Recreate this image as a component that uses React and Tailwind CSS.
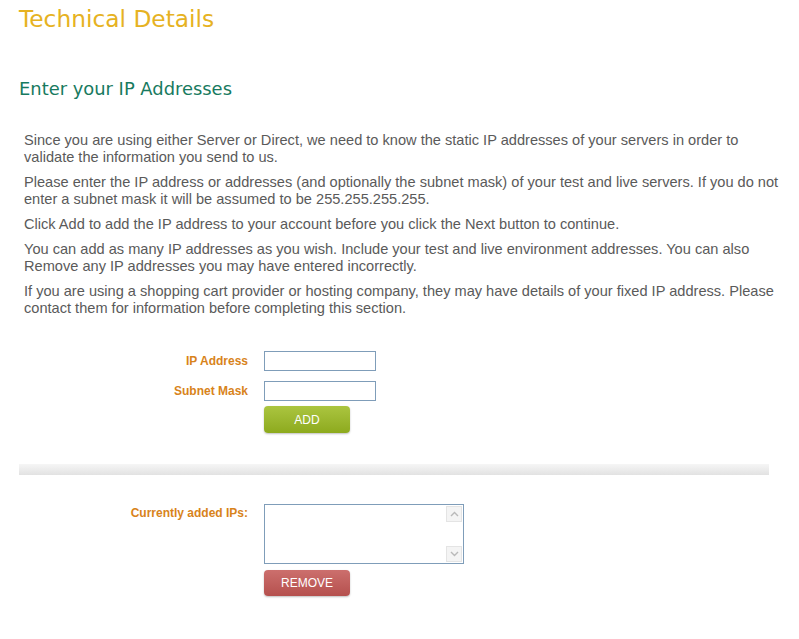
import React from 'react';

const paragraphs = [
  'Since you are using either Server or Direct, we need to know the static IP addresses of your servers in order to validate the information you send to us.',
  'Please enter the IP address or addresses (and optionally the subnet mask) of your test and live servers. If you do not enter a subnet mask it will be assumed to be 255.255.255.255.',
  'Click Add to add the IP address to your account before you click the Next button to continue.',
  'You can add as many IP addresses as you wish. Include your test and live environment addresses. You can also Remove any IP addresses you may have entered incorrectly.',
  'If you are using a shopping cart provider or hosting company, they may have details of your fixed IP address. Please contact them for information before completing this section.',
];

function Label({ children }) {
  return (
    <div className="w-[248px] text-right text-[12px] font-bold text-[#d8831b] font-['Liberation_Sans',Arial,sans-serif]">
      {children}
    </div>
  );
}

function Chevron({ up }) {
  return (
    <svg width="9" height="6" viewBox="0 0 9 6" className="text-[#b9b9b9]">
      <path d={up ? 'M1 5 L4.5 1.5 L8 5' : 'M1 1 L4.5 4.5 L8 1'} fill="none" stroke="currentColor" strokeWidth="1.4" />
    </svg>
  );
}

export default function App() {
  return (
    <div className="min-h-[639px] bg-white pl-[19px] pt-[4px] font-['Liberation_Sans',Arial,sans-serif]">
      <h1 className="text-[23.3px] leading-[29px] text-[#e6b222] font-['DejaVu_Sans',Verdana,sans-serif]">
        Technical Details
      </h1>

      <h2 className="mt-[45px] text-[17.9px] leading-[22px] text-[#177a60] font-['DejaVu_Sans',Verdana,sans-serif]">
        Enter your IP Addresses
      </h2>

      {/* intro text */}
      <div className="mt-[32px] pl-[5px] w-[765px] text-[14.6px] leading-[17px] text-[#5a5a5a] space-y-[8px]">
        {paragraphs.map((p, i) => (
          <p key={i}>{p}</p>
        ))}
      </div>

      {/* ip entry */}
      <div className="mt-[34px] ml-[-19px] flex flex-col gap-[10px]">
        <div className="flex items-center gap-4">
          <Label>IP Address</Label>
          <input className="w-[112px] h-[20px] border border-[#7f9db9] bg-white outline-none" />
        </div>
        <div className="flex items-center gap-4">
          <Label>Subnet Mask</Label>
          <input className="w-[112px] h-[20px] border border-[#7f9db9] bg-white outline-none" />
        </div>
      </div>
      <div className="ml-[245px] mt-[5px]">
        <button
          type="button"
          className="w-[86px] h-[27px] rounded-[4px] bg-gradient-to-b from-[#abc53f] to-[#8daa1d] text-white text-[12px] shadow-[0_1px_2px_rgba(0,0,0,0.25)]"
        >
          ADD
        </button>
      </div>

      <div className="mt-[31px] w-[750px] h-[11px] bg-gradient-to-b from-[#f6f6f6] to-[#e2e2e2]" />

      {/* added ips */}
      <div className="mt-[29px] ml-[-19px] flex items-start gap-4">
        <Label>Currently added IPs:</Label>
        <div className="flex flex-col gap-[6px]">
          <div className="w-[200px] h-[60px] border border-[#7f9db9] bg-white flex">
            <div className="flex-1" />
            <div className="w-[17px] flex flex-col justify-between py-px pr-px">
              <div className="h-[16px] border border-[#e4e4e4] bg-[#f4f4f4] flex items-center justify-center">
                <Chevron up />
              </div>
              <div className="h-[16px] border border-[#e4e4e4] bg-[#f4f4f4] flex items-center justify-center">
                <Chevron />
              </div>
            </div>
          </div>
          <button
            type="button"
            className="w-[86px] h-[26px] rounded-[4px] bg-gradient-to-b from-[#cc6f6d] to-[#b5504e] text-white text-[12px] shadow-[0_1px_2px_rgba(0,0,0,0.25)]"
          >
            REMOVE
          </button>
        </div>
      </div>
    </div>
  );
}
